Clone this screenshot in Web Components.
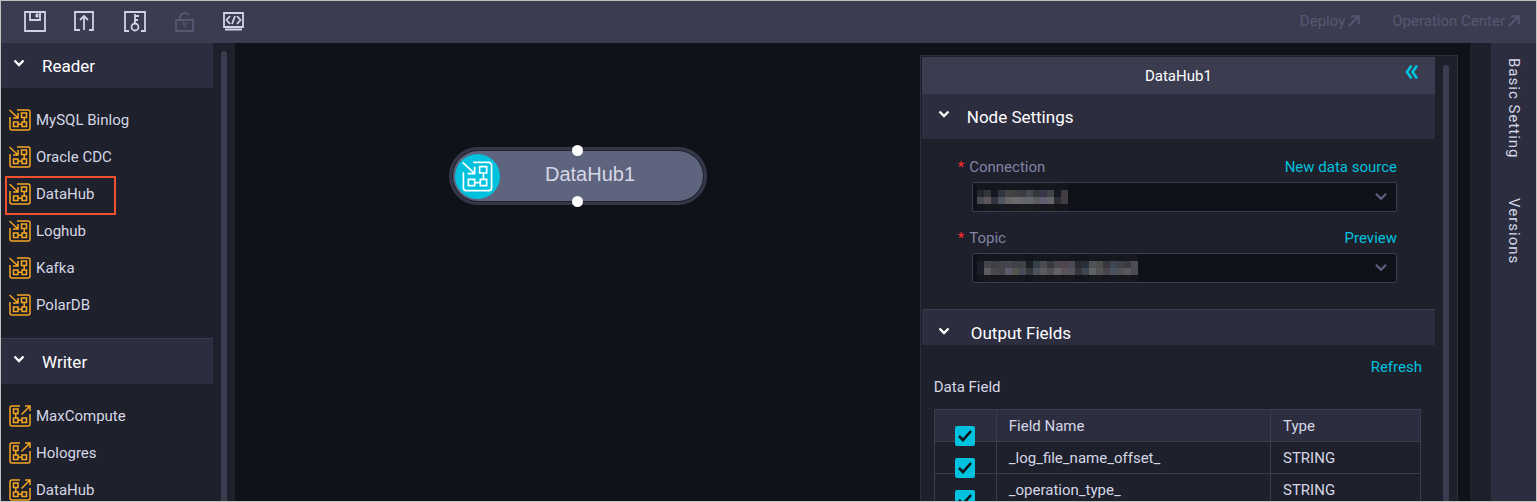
<!DOCTYPE html>
<html lang="en">
<head>
<meta charset="utf-8">
<title>DataHub1</title>
<style>
  html, body {
    height: 100%;
    margin: 0;
  }
  body {
    --bar: #3b3c50;
    --head: #2c2e3f;
    --panel: #1e202c;
    --canvas: #0f1219;
    --accent: #00c1de;
    --muted: #565873;
    background: #0f1219;
    color: #d5d7e6;
    font: 15px/20px Roboto, sans-serif;
  }
</style>
</head>
<body>
<stream-studio></stream-studio>

<script>
const ICONS = {
  save: `<svg viewBox="0 0 24 24"><path d="M2 3h20v19H2zM7 3v8h10V3"/><path d="M13 5h2v3h-2z" fill="currentColor" stroke-width="1"/></svg>`,
  submit: `<svg viewBox="0 0 24 24"><path d="M7 21H2V3h18v18h-4M11 21V7M7 11l4-4 4 4"/></svg>`,
  key: `<svg viewBox="0 0 24 24"><path d="M6 22H2V3h20v19h-4M12 15V5M12 7h4M12 11h3"/><circle cx="12" cy="18" r="3.5"/></svg>`,
  lock: `<svg viewBox="0 0 24 24"><path d="M3 11h17v11H3zM7 11V8a5 5 0 0 1 9-2"/><path d="M10 14h4l-2 4z" stroke-width="1"/></svg>`,
  code: `<svg viewBox="0 0 24 24"><path d="M1 4h19v14H1zM2 20.500h17M7 7l-3.500 4L7 15M14 7l3.500 4-3.500 4M12 7l-3 8"/></svg>`,
  reader: `<svg viewBox="0 0 22 22"><path d="M1 8v11a2 2 0 0 0 2 2h16a2 2 0 0 0 2-2V3a2 2 0 0 0-2-2H8M.5 1L9 9M9 4v5H4M12.500 4h5v4.500h-5zM4.500 13H9v4.500H4.500zM13 13h4.500v4.500H13zM9 15.300h4M15.200 8.500V13"/></svg>`,
  writer: `<svg viewBox="0 0 22 22"><path d="M21 9v10a2 2 0 0 1-2 2H3a2 2 0 0 1-2-2V3a2 2 0 0 1 2-2h8M12.500 9.500L21 1M16 1h5v5M4.500 4H9v4.500H4.500zM4.500 13H9v4.500H4.500zM13 13h4.500v4.500H13zM9 15.300h4M6.800 8.500V13"/></svg>`,
  chevron: `<svg viewBox="0 0 12 8"><path d="M1.500 1.500L6 6l4.500-4.500"/></svg>`,
  out: `<svg viewBox="0 0 12 12"><path d="M1 11L10.500 1.500M3 1.200h7.800V9"/></svg>`,
  collapse: `<svg viewBox="0 0 14 14"><path d="M6.500 .5L2 7l4.500 6.500M12 .5L7.500 7l4.500 6.500"/></svg>`
};

// every element clones its template into an open shadow root
class BaseElement extends HTMLElement {
  constructor() {
    super();
    this.attachShadow({ mode: 'open' });
  }
  getStyles() {
    return '';
  }
  getMarkup() {
    return '<slot></slot>';
  }
  connectedCallback() {
    const template = document.createElement('template');
    template.innerHTML = `
      <style>
        *, :host { box-sizing: border-box; }
        button { font: inherit; color: inherit; background: none; border: 0; padding: 0; cursor: pointer; }
        a { color: var(--accent); text-decoration: none; }
        ${this.getStyles()}
      </style>
      ${this.getMarkup()}
    `;
    this.shadowRoot.replaceChildren(template.content.cloneNode(true));
  }
}

class UiIcon extends BaseElement {
  getStyles() {
    return `
      :host { display: block; flex: none; width: 24px; height: 24px; }
      svg { display: block; width: 100%; height: 100%; fill: none; stroke: currentColor; stroke-width: var(--stroke, 1.8); }
    `;
  }
  getMarkup() {
    return ICONS[this.getAttribute('name')];
  }
}
customElements.define('ui-icon', UiIcon);

class TopBar extends BaseElement {
  getStyles() {
    return `
      :host {
        display: flex;
        align-items: center;
        justify-content: space-between;
        height: 42px;
        flex: none;
        padding: 0 16px 2px 22px;
        background: var(--bar);
      }
      .tools { display: flex; gap: 26px; }
      .links { display: flex; gap: 32px; }
      .links a { display: flex; align-items: center; gap: 3px; color: var(--muted); }
      .links ui-icon { width: 12px; height: 12px; --stroke: 2; }
      button { color: #d0d3e8; }
      button:disabled { color: var(--muted); }
    `;
  }
  getMarkup() {
    return `
      <div class="tools">
        <button aria-label="Save"><ui-icon name="save"></ui-icon></button>
        <button aria-label="Submit"><ui-icon name="submit"></ui-icon></button>
        <button aria-label="Key"><ui-icon name="key"></ui-icon></button>
        <button aria-label="Unlock" disabled><ui-icon name="lock"></ui-icon></button>
        <button aria-label="Script"><ui-icon name="code"></ui-icon></button>
      </div>
      <nav class="links">
        <a href="#deploy">Deploy <ui-icon name="out"></ui-icon></a>
        <a href="#operation">Operation Center <ui-icon name="out"></ui-icon></a>
      </nav>
    `;
  }
}
customElements.define('top-bar', TopBar);

class SectionHead extends BaseElement {
  getStyles() {
    return `
      :host { display: block; background: var(--head); color: #fff; font-size: 17px; }
      button { display: flex; align-items: center; gap: 17px; width: 100%; height: 45px; padding-left: 12px; text-align: left; }
      ui-icon { width: 12px; height: 8px; margin-bottom: 6px; --stroke: 2.4; }
      :host([lined]) { border-top: 1px solid var(--bar); }
      :host([compact]) button { height: 35px; gap: 21px; align-items: flex-end; padding-bottom: 2px; }
      :host([compact]) ui-icon { margin-bottom: 8px; }
      :host([indent]) button { padding-left: 16px; }
    `;
  }
  getMarkup() {
    return `<button aria-expanded="true"><ui-icon name="chevron"></ui-icon><slot></slot></button>`;
  }
}
customElements.define('section-head', SectionHead);

class ComponentItem extends BaseElement {
  getStyles() {
    return `
      :host { display: flex; position: relative; height: 37px; padding-left: 8px; }
      button { display: flex; align-items: center; gap: 5px; }
      ui-icon { width: 22px; height: 22px; color: #f5a623; --stroke: 1.5; }
      :host([marked])::after {
        content: '';
        box-sizing: border-box;
        position: absolute;
        inset: 1px auto -3px 4px;
        width: 111px;
        border: 2px solid #ee5030;
        pointer-events: none;
      }
    `;
  }
  getMarkup() {
    return `<button><ui-icon name="${this.getAttribute('kind')}"></ui-icon><slot></slot></button>`;
  }
}
customElements.define('component-item', ComponentItem);

class ScrollRail extends BaseElement {
  getStyles() {
    return `:host { display: block; flex: none; width: 6px; margin: 8px 8px 0; background: var(--bar); border-radius: 3px 3px 0 0; }`;
  }
}
customElements.define('scroll-rail', ScrollRail);

class ComponentList extends BaseElement {
  getStyles() {
    return `
      :host { display: flex; flex: none; width: 234px; background: var(--panel); }
      .lists { flex: 1; min-width: 0; }
      .items { padding: 13px 0 15px; }
    `;
  }
  items(kind, names, marked) {
    return names.map(name => `<component-item kind="${kind}" ${name === marked ? 'marked' : ''}>${name}</component-item>`).join('');
  }
  getMarkup() {
    return `
      <div class="lists">
        <section-head>Reader</section-head>
        <div class="items">${this.items('reader', ['MySQL Binlog', 'Oracle CDC', 'DataHub', 'Loghub', 'Kafka', 'PolarDB'], 'DataHub')}</div>
        <section-head lined>Writer</section-head>
        <div class="items">${this.items('writer', ['MaxCompute', 'Hologres', 'DataHub'])}</div>
      </div>
      <scroll-rail></scroll-rail>
    `;
  }
}
customElements.define('component-list', ComponentList);

class FlowNode extends BaseElement {
  getStyles() {
    return `
      :host {
        display: block;
        position: absolute;
        width: 258px;
        border: 3px solid #36384a;
        border-radius: 30px;
        background: #1e202c;
        padding: 1px;
      }
      .body {
        display: flex;
        align-items: center;
        position: relative;
        height: 50px;
        padding: 0 2px;
        border-radius: 25px;
        background: #5f647e;
        font: 20px/24px "Liberation Sans", sans-serif;
      }
      .badge { display: grid; place-items: center; width: 45px; height: 45px; border-radius: 50%; background: var(--accent); color: #fff; }
      .badge ui-icon { width: 31px; height: 31px; --stroke: 1.2; }
      .name { flex: 1; padding: 0 21px 4px 0; text-align: center; }
      i { position: absolute; left: 50%; width: 11px; height: 11px; margin-left: -6px; border-radius: 50%; background: #fff; }
      i.in { top: -6px; }
      i.out { bottom: -6px; }
    `;
  }
  getMarkup() {
    return `
      <div class="body">
        <span class="badge"><ui-icon name="reader"></ui-icon></span>
        <span class="name"><slot></slot></span>
        <i class="in"></i>
        <i class="out"></i>
      </div>
    `;
  }
}
customElements.define('flow-node', FlowNode);

// value is masked with a block mosaic, one hex colour for each 7px cell
const MASKS = {
  connection: [
    '13161d 13161d 12151c 13161d 14171d 14171d 13161d 13161d 13161d 13161d 14171d 12151c 13161d',
    '25282f 34353b 16181f 2e3440 434343 3f3f41 3b3c40 434b55 35383b 383749 404446 161a24 3f3c42',
    '484b54 5a565c 33333f 4c5661 646464 6b6a6a 67686c 64686d 5b5b60 615c70 636566 2c2d33 413e44',
    '14161d 16181d 14161c 16191f 17191e 18191d 1a1b1e 191a1e 17191d 16181e 17191d 13151b 14161c'
  ],
  topic: [
    '11141b 14171d 13161c 14171d 14171d 14171d 14171d 12151b 14171d 15181e 14171d 15181e 15181e 14171d 13161c 13161c 15181e 15181e 14171d 15181e 14171d 15181e 17191f',
    '1b1d28 46464b 3f3f45 45434a 44454e 414148 404247 1c1f24 35404a 4a4d50 38393d 49484f 50454d 4c4b55 292b31 28303b 505355 4b4d4f 39373d 3d4654 3e4045 3d3b41 4e4d57',
    '1b1d28 5c5b62 49474d 46454d 5c5d6c 54554e 444c57 343639 49515b 5a5a5d 504f55 636264 58555b 54535f 36363c 40464f 5f6366 525253 49464b 4b535e 515154 5b565d 4b4b55',
    '12141b 16181d 15171c 15171d 17191f 16181c 14171e 12151b 15181e 16181d 15171c 18191d 17181c 16181e 13151b 14171e 18191d 17181c 15171c 15181e 16181d 17181c 15171e'
  ]
};

class SelectField extends BaseElement {
  getStyles() {
    return `
      :host { display: block; padding-left: 37px; }
      .top { display: flex; justify-content: space-between; }
      label { color: #8184a3; }
      label::before { content: '*'; margin-left: -13px; padding-right: 5px; color: #ff2e2e; }
      .control { position: relative; margin-top: 5px; margin-left: 1px; }
      select {
        display: block;
        width: 100%;
        height: 30px;
        appearance: none;
        border: 1px solid var(--bar);
        border-radius: 2px;
        background: var(--canvas);
        color: inherit;
        font: inherit;
      }
      ui-icon { position: absolute; right: 9px; top: 10px; width: 14px; height: 9px; color: #5f6180; --stroke: 2; pointer-events: none; }
      .mask { position: absolute; left: 5px; top: 1px; pointer-events: none; }
    `;
  }
  getMask() {
    const rows = MASKS[this.getAttribute('mask')];
    const cells = rows.map((row, y) => row.split(' ').map((color, x) =>
      `<rect x="${x * 7}" y="${y * 7}" width="7" height="7" fill="#${color}"/>`).join('')).join('');
    const width = rows[0].split(' ').length * 7;
    return `<svg class="mask" width="${width}" height="28" viewBox="0 0 ${width} 28" shape-rendering="crispEdges">${cells}</svg>`;
  }
  getMarkup() {
    return `
      <div class="top">
        <label for="field">${this.getAttribute('label')}</label>
        <a href="#action">${this.getAttribute('action')}</a>
      </div>
      <div class="control">
        <select id="field"><option></option></select>
        ${this.getMask()}
        <ui-icon name="chevron"></ui-icon>
      </div>
    `;
  }
}
customElements.define('select-field', SelectField);

class FieldTable extends BaseElement {
  getStyles() {
    return `
      :host { display: block; }
      table { width: 100%; table-layout: fixed; border-collapse: collapse; }
      th, td { height: 32px; padding: 0 12px; border: 1px solid var(--bar); font-weight: 400; text-align: left; line-height: 20px; }
      th { background: var(--head); }
      .check { width: 62px; padding: 0 20px; vertical-align: top; }
      .type { width: 150px; }
      /* positioned so that the box paints over the row line */
      input {
        display: block;
        position: relative;
        appearance: none;
        width: 20px;
        height: 20px;
        margin: 16px 0 -5px;
        border-radius: 2px;
        background: var(--accent);
      }
      input:checked {
        background: var(--accent) url("data:image/svg+xml,%3Csvg xmlns='http://www.w3.org/2000/svg' viewBox='0 0 20 20'%3E%3Cpath d='M4 10l4 4 8-9' fill='none' stroke='%230f1219' stroke-width='2.6'/%3E%3C/svg%3E");
      }
    `;
  }
  getMarkup() {
    const rows = [['_log_file_name_offset_', 'STRING'], ['_operation_type_', 'STRING']];
    return `
      <table>
        <thead>
          <tr>
            <th class="check"><input type="checkbox" aria-label="Select all" checked></th>
            <th>Field Name</th>
            <th class="type">Type</th>
          </tr>
        </thead>
        <tbody>
          ${rows.map(([name, type]) => `
            <tr>
              <td class="check"><input type="checkbox" aria-label="${name}" checked></td>
              <td>${name}</td>
              <td>${type}</td>
            </tr>`).join('')}
        </tbody>
      </table>
    `;
  }
}
customElements.define('field-table', FieldTable);

class NodePanel extends BaseElement {
  getStyles() {
    return `
      :host {
        display: flex;
        flex: none;
        width: calc(35% + 1px);
        margin: 12px 12px 0 0;
        padding: 1px 0 0 1px;
        border: 1px solid var(--head);
        border-bottom: 0;
        background: var(--panel);
      }
      .content { flex: 1; min-width: 0; }
      header {
        display: grid;
        grid-template-columns: 1fr auto 1fr;
        align-items: center;
        height: 37px;
        background: var(--bar);
        color: #fff;
      }
      header span { grid-column: 2; }
      header button { justify-self: end; margin: 0 16px 8px 0; color: var(--accent); }
      header ui-icon { width: 14px; height: 14px; --stroke: 2.6; }
      .form { display: grid; gap: 16px; padding: 18px 38px 26px 12px; }
      .output { padding: 12px 14px 0 12px; }
      .refresh { display: block; text-align: right; margin-right: -1px; }
      p { margin: 0 0 12px; line-height: 20px; }
      scroll-rail { margin-right: 8px; }
    `;
  }
  getMarkup() {
    return `
      <div class="content">
        <header>
          <span><slot></slot></span>
          <button aria-label="Collapse"><ui-icon name="collapse"></ui-icon></button>
        </header>
        <section-head indent>Node Settings</section-head>
        <div class="form">
          <select-field label="Connection" action="New data source" mask="connection"></select-field>
          <select-field label="Topic" action="Preview" mask="topic"></select-field>
        </div>
        <section-head lined compact indent>Output Fields</section-head>
        <div class="output">
          <a class="refresh" href="#refresh">Refresh</a>
          <p>Data Field</p>
          <field-table></field-table>
        </div>
      </div>
      <scroll-rail></scroll-rail>
    `;
  }
}
customElements.define('node-panel', NodePanel);

class SideTabs extends BaseElement {
  getStyles() {
    return `
      :host { display: flex; flex-direction: column; align-items: center; gap: 39px; flex: none; width: 66px; padding-top: 15px; border-left: 21px solid var(--panel); background: var(--head); }
      button { writing-mode: vertical-rl; letter-spacing: 1px; line-height: 20px; }
    `;
  }
  getMarkup() {
    return `<button>Basic Setting</button><button>Versions</button>`;
  }
}
customElements.define('side-tabs', SideTabs);

class StreamStudio extends BaseElement {
  getStyles() {
    return `
      :host { display: flex; flex-direction: column; height: 100vh; overflow: hidden; border: 1px solid #c0c2c2; background: var(--canvas); }
      main { display: flex; flex: 1; min-height: 0; overflow: hidden; }
      .canvas { flex: 1; position: relative; min-width: 0; }
      flow-node { left: 214px; top: 104px; }
    `;
  }
  getMarkup() {
    return `
      <top-bar></top-bar>
      <main>
        <component-list></component-list>
        <div class="canvas"><flow-node>DataHub1</flow-node></div>
        <node-panel>DataHub1</node-panel>
        <side-tabs></side-tabs>
      </main>
    `;
  }
}
customElements.define('stream-studio', StreamStudio);
</script>
</body>
</html>
